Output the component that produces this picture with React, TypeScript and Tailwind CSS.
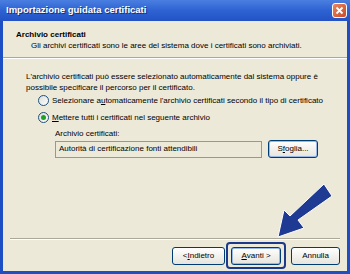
import React from 'react';

const font = { fontFamily: '"Liberation Sans", "DejaVu Sans", sans-serif' };

function Radio({ checked }: { checked?: boolean }) {
  return (
    <span className="w-[11px] h-[11px] rounded-full border border-[#1c5180] bg-gradient-to-br from-[#dcdcd7] to-white flex items-center justify-center shrink-0">
      {checked && <span className="w-[5px] h-[5px] rounded-full bg-[#21a121]" />}
    </span>
  );
}

function XpButton({ children, focus }: { children: React.ReactNode; focus?: boolean }) {
  return (
    <div
      className={`h-[18px] rounded-[3px] border border-[#003c74] bg-gradient-to-b from-white to-[#e6e4dc] flex items-center justify-center text-[8px] text-black ${
        focus ? 'shadow-[inset_0_0_0_1px_#98b8ea]' : ''
      }`}
    >
      {children}
    </div>
  );
}

export default function App() {
  return (
    <div className="w-[350px] h-[274px] flex flex-col bg-[#1c4fc4] relative overflow-hidden" style={font}>
      {/* Title bar */}
      <div className="h-[21px] shrink-0 bg-gradient-to-b from-[#4a7fe0] via-[#2e62d2] to-[#2352c4] flex items-center justify-between pl-[6px] pr-[3px]">
        <span className="text-white text-[9.5px] font-bold [text-shadow:1px_1px_0_#10317e]">
          Importazione guidata certificati
        </span>
        <span className="w-[15px] h-[15px] rounded-[3px] border border-white bg-gradient-to-br from-[#e8855f] to-[#c94b24] flex items-center justify-center">
          <svg width="9" height="9" viewBox="0 0 9 9">
            <path d="M1.5 1.5 L7.5 7.5 M7.5 1.5 L1.5 7.5" stroke="white" strokeWidth="1.8" />
          </svg>
        </span>
      </div>

      {/* Window body */}
      <div className="flex-1 mx-[3px] mb-[3px] bg-[#ece9d8] flex flex-col">
        {/* Header */}
        <div className="h-[37px] shrink-0 border-b border-[#aca899] flex flex-col pt-[8px] pl-[13px]">
          <span className="text-[8px] font-bold text-black leading-[11px]">Archivio certificati</span>
          <span className="text-[8px] text-black leading-[11px] pl-[15px]">
            Gli archivi certificati sono le aree del sistema dove i certificati sono archiviati.
          </span>
        </div>
        <div className="h-px bg-white" />

        {/* Content */}
        <div className="flex-1 flex flex-col pl-[23px] pt-[12px] text-[8px] text-black">
          <p className="leading-[11px] w-[300px]">
            L'archivio certificati può essere selezionato automaticamente dal sistema oppure è possibile
            specificare il percorso per il certificato.
          </p>
          <div className="flex items-center gap-[3px] h-[11px] mt-[2px] pl-[12px] whitespace-nowrap">
            <Radio />
            <span>
              Selezionare a<span className="underline">u</span>tomaticamente l'archivio certificati secondo il
              tipo di certificato
            </span>
          </div>
          <div className="flex items-center gap-[3px] h-[11px] mt-[6px] pl-[12px] whitespace-nowrap">
            <Radio checked />
            <span>
              <span className="underline">M</span>ettere tutti i certificati nel seguente archivio
            </span>
          </div>
          <div className="pl-[29px] mt-[5px] leading-[11px]">Archivio certificati:</div>
          <div className="flex items-center gap-[6px] pl-[29px] mt-[1px]">
            <div className="w-[207px] h-[17px] border border-[#7f9db9] bg-[#ece9d8] flex items-center pl-[3px] whitespace-nowrap">
              Autorità di certificazione fonti attendibili
            </div>
            <div className="w-[50px]">
              <XpButton focus>
                S<span className="underline">f</span>oglia...
              </XpButton>
            </div>
          </div>
        </div>

        {/* Footer */}
        <div className="mx-[7px] h-px bg-[#aca899]" />
        <div className="mx-[7px] h-px bg-white" />
        <div className="h-[31px] shrink-0 flex items-center justify-end pr-[7px]">
          <div className="w-[53px]">
            <XpButton>
              &lt; <span className="underline">I</span>ndietro
            </XpButton>
          </div>
          <div className="w-[60px] h-[27px] ml-[1px] rounded-[4px] border-2 border-[#1b3a8c] flex items-center justify-center">
            <div className="w-[50px]">
              <XpButton focus>
                <span className="underline">A</span>vanti &gt;
              </XpButton>
            </div>
          </div>
          <div className="w-[49px] ml-[5px]">
            <XpButton>Annulla</XpButton>
          </div>
        </div>
      </div>

      {/* Pointer arrow overlay */}
      <svg className="absolute left-[272px] top-[180px]" width="62" height="60" viewBox="0 0 62 60">
        <path
          d="M52 4 L60 16 L26 40 L32 48 L6 57 L12 30 L18 36 Z"
          fill="#1f3a93"
          stroke="#ffffff"
          strokeWidth="1"
          strokeLinejoin="round"
        />
      </svg>
    </div>
  );
}
